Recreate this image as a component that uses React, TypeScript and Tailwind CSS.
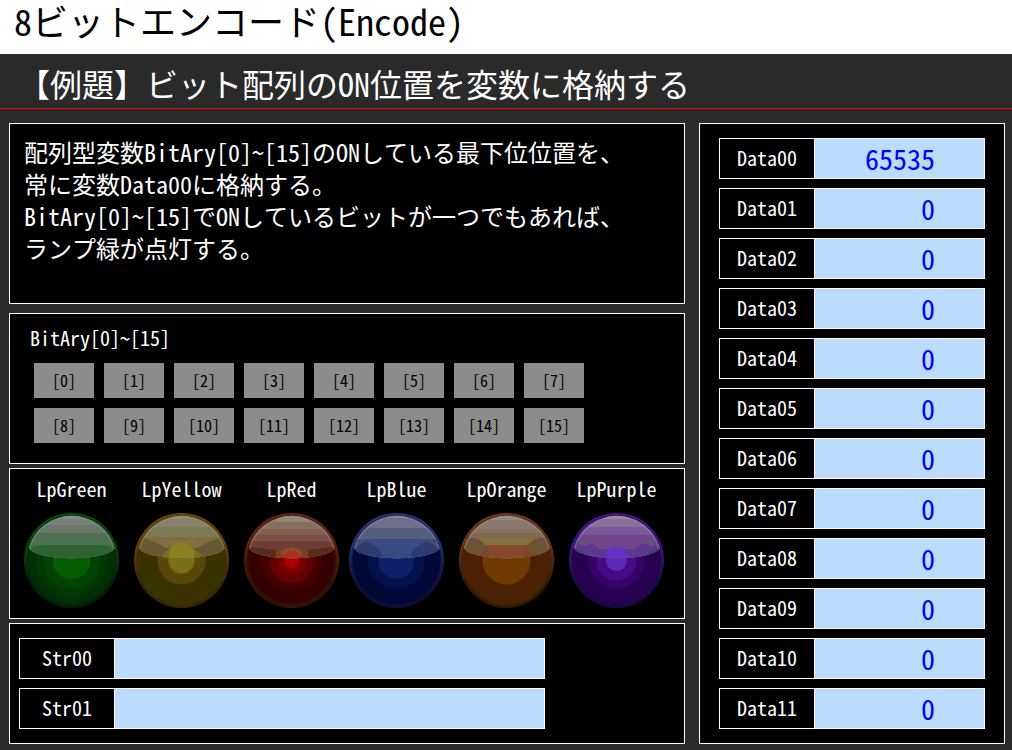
import { useId } from "react";

type Band = [offset: number, color: string];
type Ring = [radius: number, color: string];

interface LampSpec {
  name: string;
  rim: string;
  rimLow: string;
  rings: Ring[];
  bands: Band[];
  gloss: { d: string; fill: string }[];
  edge: string;
}

const GLOSS = "M5 35A44.5 44.5 0 0 1 90.5 35A43 11.5 0 0 1 5 35Z";

const lampGroups: LampSpec[][] = [
  [
    {
      name: "LpGreen",
      rim: "#064d0a",
      rimLow: "#031b05",
      rings: [[46, "#022a04"], [43, "#023006"], [36, "#023804"], [28.5, "#034203"], [19, "#055c03"]],
      bands: [[0, "#868886"], [6, "#7a807b"], [12, "#6b766f"], [20, "#4d714e"], [32, "#2f622f"]],
      gloss: [{ d: "M0 32H22Q16 31 8 36L0 38ZM96 32H73Q80 31 88 36L96 38Z", fill: "#3f6a42" }],
      edge: "#8e9490",
    },
    {
      name: "LpYellow",
      rim: "#694607",
      rimLow: "#35230a",
      rings: [[46, "#382f05"], [44, "#393302"], [24, "#59470a"], [13.5, "#86530c"], [12.5, "#77711a"]],
      bands: [[0, "#908776"], [6, "#86806c"], [14, "#7c7955"], [24, "#806d44"], [35, "#66562c"]],
      gloss: [
        { d: "M0 23Q16 25 35 37L31 44L20 47L0 42Z", fill: "#665830" },
        { d: "M96 23Q79 25 60 37L64 44L76 47L96 42Z", fill: "#665830" },
        { d: "M33 27H63L57 38H38Z", fill: "#856f3d" },
        { d: "M37 34L27 43L33 47H63L68 42L58 34Z", fill: "#776e26" },
        { d: "M35 46A13 13 0 1 1 60 46Z", fill: "#89801f" },
      ],
      edge: "#9b927b",
    },
    {
      name: "LpRed",
      rim: "#642718",
      rimLow: "#2c1505",
      rings: [[46, "#360b02"], [43, "#350100"], [31, "#420000"], [22.5, "#640000"], [14, "#7d0000"], [7.5, "#ad0000"]],
      bands: [[0, "#948579"], [9, "#87705f"], [16, "#825f50"], [22, "#77534a"], [28, "#6f3d37"]],
      gloss: [
        { d: "M0 33Q18 35 32 37V50H0ZM96 33Q78 35 64 37V50H96Z", fill: "#592b1d" },
        { d: "M32 37H64V47H32Z", fill: "#75421e" },
        { d: "M38 47L37 38Q47 31 58 38V47Z", fill: "#86502b" },
        { d: "M37 46Q40 38 48 38Q56 38 59 46Z", fill: "#b02e20" },
      ],
      edge: "#9a8b7d",
    },
  ],
  [
    {
      name: "LpBlue",
      rim: "#28397a",
      rimLow: "#180933",
      rings: [[46, "#0b123f"], [44, "#010936"], [28.5, "#03124b"], [18, "#0e206c"]],
      bands: [[0, "#8d7a91"], [5, "#716e8d"], [15, "#575d7c"], [26, "#384b83"]],
      gloss: [
        { d: "M0 28Q14 24 26 33Q35 39 33 49H0Z", fill: "#2c3c70" },
        { d: "M96 28Q80 24 69 33Q60 39 62 49H96Z", fill: "#2c3c70" },
        { d: "M6 33L12 26L19 27Q11 30 8 35ZM89 33L83 26L76 27Q84 30 88 35Z", fill: "#495063" },
      ],
      edge: "#a385a0",
    },
    {
      name: "LpOrange",
      rim: "#733724",
      rimLow: "#2c1903",
      rings: [[46, "#412002"], [44, "#4a2203"], [24, "#703b02"]],
      bands: [[0, "#938a7e"], [7, "#8b7770"], [16, "#846e5c"], [20, "#80684e"], [25, "#83713f"], [32, "#86492d"]],
      gloss: [
        { d: "M0 25H14Q24 27 27 34L22 43L12 45L0 40Z", fill: "#70503c" },
        { d: "M96 25H81Q71 27 68 34L73 43L83 45L96 40Z", fill: "#70503c" },
        { d: "M5 36L11 32H25L27 36L22 40H11ZM90 36L84 32H70L68 36L73 40H84Z", fill: "#6b5630" },
        { d: "M0 39L12 41H22L30 36V50H0ZM96 39L84 41H73L65 36V50H96Z", fill: "#7d442b" },
      ],
      edge: "#a19a8a",
    },
    {
      name: "LpPurple",
      rim: "#49148d",
      rimLow: "#120d3a",
      rings: [[46, "#23064e"], [44, "#280052"], [28, "#380069"], [20, "#470a85"], [10.5, "#5b2ab4"]],
      bands: [[0, "#96899a"], [6, "#896f9b"], [14, "#795996"], [22, "#70458c"], [36, "#60368c"]],
      gloss: [
        { d: "M0 28H20L34 39V48H0ZM96 28H76L62 39V48H96Z", fill: "#60368a" },
        { d: "M9 29Q17 24 24 27Q23 32 12 33ZM87 29Q79 24 72 27Q73 32 84 33Z", fill: "#66507e" },
        { d: "M5 35L10 35L17 39L16 42L9 41ZM91 35L86 35L79 39L80 42L87 41Z", fill: "#394579" },
        { d: "M35 47Q37 34 48 34Q59 34 61 47Z", fill: "#6531c3" },
      ],
      edge: "#a193aa",
    },
  ],
];

function Lamp({ lamp }: { lamp: LampSpec }) {
  const id = useId();
  return (
    <figure className="flex w-[95px] flex-col items-center gap-2.5">
      <figcaption className="text-xl leading-7 whitespace-nowrap">{lamp.name}</figcaption>
      <svg className="block" width="95" height="95" viewBox="0 0 95 95" role="img" aria-label={lamp.name}>
        <defs>
          <linearGradient id={`${id}r`} x1="0" y1="0" x2="0" y2="1">
            <stop offset="0.3" stopColor={lamp.rim} />
            <stop offset="0.75" stopColor={lamp.rimLow} />
          </linearGradient>
          <clipPath id={`${id}g`}>
            <path d={GLOSS} />
          </clipPath>
        </defs>
        <circle cx="47.5" cy="47.5" r="47.5" fill={`url(#${id}r)`} />
        {lamp.rings.map(([r, color]) => (
          <circle key={r} cx="47.5" cy="47.5" r={r} fill={color} />
        ))}
        <circle cx="47.5" cy="47.5" r="45.5" fill="none" stroke={`url(#${id}r)`} strokeWidth="2" opacity="0.6" />
        <g clipPath={`url(#${id}g)`}>
          {lamp.bands.map(([y, color]) => (
            <rect key={y} x="0" y={y} width="95" height="60" fill={color} />
          ))}
          {lamp.gloss.map((shape) => (
            <path key={shape.d} d={shape.d} fill={shape.fill} />
          ))}
          <path d="M5 35A44.5 44.5 0 0 1 90.5 35" fill="none" stroke={lamp.edge} strokeWidth="3" opacity="0.4" />
        </g>
      </svg>
    </figure>
  );
}

const panel = "border border-white bg-black";

function Field({ name, value = "" }: { name: string; value?: string }) {
  return (
    <div className="flex h-[41px] border border-white">
      <label
        htmlFor={name}
        className="flex w-[95px] shrink-0 items-center justify-center border-r border-white pb-0.5 text-xl"
      >
        {name}
      </label>
      <input
        id={name}
        readOnly
        value={value}
        className="w-full min-w-0 bg-[#bbdbff] pr-[49px] pb-0.5 text-right text-[28px] leading-9 text-[#0000ff] outline-none"
      />
    </div>
  );
}

const dataFields = Array.from({ length: 12 }, (_, i) => ({
  name: `Data${String(i).padStart(2, "0")}`,
  value: i === 0 ? "65535" : "0",
}));

export default function App() {
  return (
    <div className="min-h-screen bg-[#2a2a2a] pb-1.5 font-['Noto_Sans_Mono_CJK_JP','Noto_Sans_CJK_JP',monospace] text-white">
      <header>
        <h1 className="flex h-[54px] items-center bg-white px-3.5 pb-3.5 text-4xl leading-10 text-black">
          8ビットエンコード(Encode)
        </h1>
        <h2 className="flex h-[55px] items-center border-b border-[#ff0000] px-[18px] pt-1 text-[32px] leading-10">
          【例題】ビット配列のON位置を変数に格納する
        </h2>
      </header>
      <main className="flex gap-3.5 pt-3.5 pr-[7px] pl-[9px]">
        <div className="flex min-w-0 flex-1 flex-col">
          <section className={`${panel} h-[181px] px-3.5 py-3 text-2xl leading-8`}>
            <p>配列型変数BitAry[0]~[15]のONしている最下位位置を、</p>
            <p>常に変数Data00に格納する。</p>
            <p>BitAry[0]~[15]でONしているビットが一つでもあれば、</p>
            <p>ランプ緑が点灯する。</p>
          </section>
          <section className={`${panel} mt-[9px] h-[151px] px-5 pt-2.5`}>
            <h3 className="text-xl leading-7">BitAry[0]~[15]</h3>
            <div className="mt-[11px] ml-1 grid grid-cols-[repeat(8,60px)] gap-2.5">
              {Array.from({ length: 16 }, (_, i) => (
                <button key={i} type="button" className="h-[35px] bg-[#8c8c8c] pb-0.5 text-base text-black">
                  [{i}]
                </button>
              ))}
            </div>
          </section>
          <section className={`${panel} mt-1 flex h-[151px] gap-2.5 px-3.5 pt-1.5`}>
            {lampGroups.map((group) => (
              <div key={group[0].name} className="flex gap-[15px]">
                {group.map((lamp) => (
                  <Lamp key={lamp.name} lamp={lamp} />
                ))}
              </div>
            ))}
          </section>
          <section className={`${panel} mt-1 h-[121px] px-[9px] pt-3.5`}>
            <div className="flex max-w-[526px] flex-col gap-[9px]">
              <Field name="Str00" />
              <Field name="Str01" />
            </div>
          </section>
        </div>
        <section className={`${panel} flex w-[306px] shrink-0 flex-col gap-[9px] px-[19px] py-3.5`}>
          {dataFields.map((field) => (
            <Field key={field.name} {...field} />
          ))}
        </section>
      </main>
    </div>
  );
}
